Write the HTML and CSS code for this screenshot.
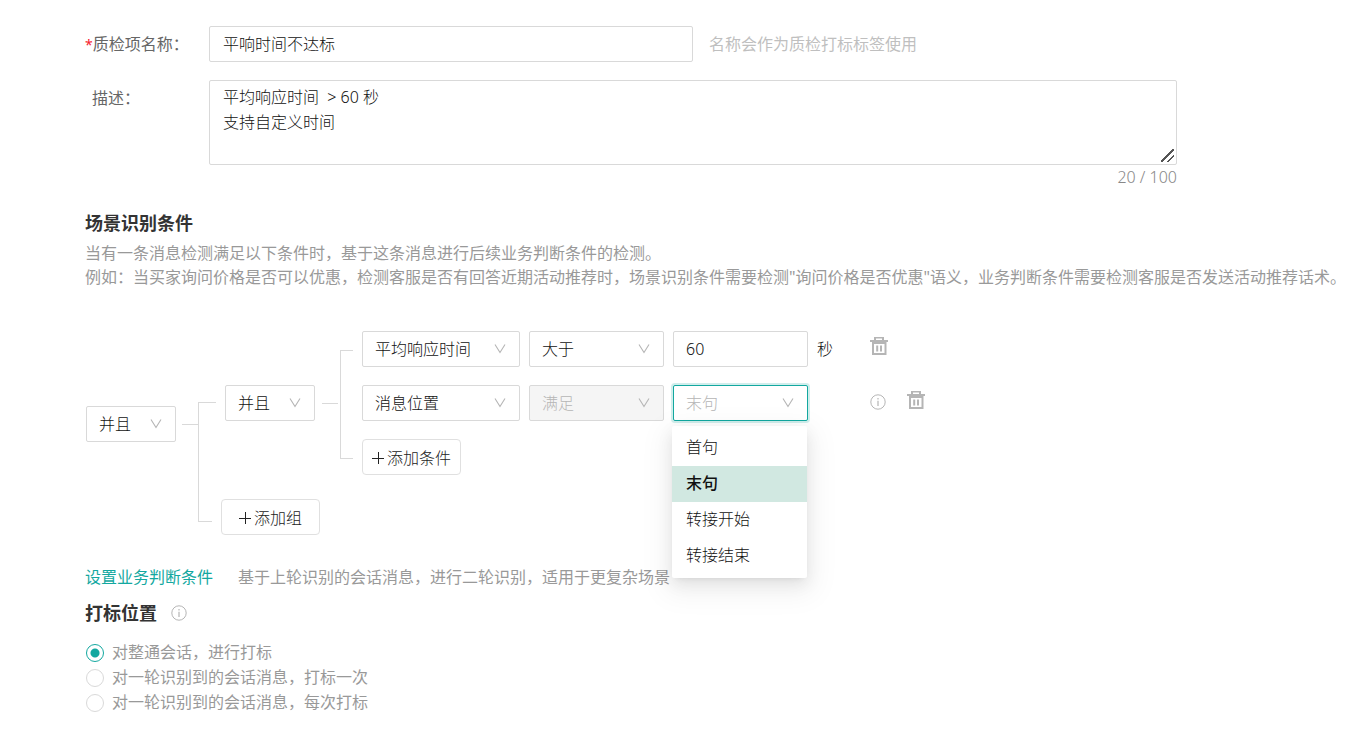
FILE: index.html
```html
<!DOCTYPE html>
<html lang="zh-CN">
<head>
<meta charset="utf-8">
<title>质检项</title>
<link rel="stylesheet" href="styles.css">
</head>
<body>
<svg class="sprite" aria-hidden="true">
  <symbol id="chevron" viewBox="0 0 12 12"><path d="M1 1.500 6 9.500 11 1.500" fill="none" stroke="currentColor" stroke-width="1.100"/></symbol>
  <symbol id="trash" viewBox="0 0 18 18"><path d="M0 3h18v2H0zM4 3V0h10v3h-2V1.500H6V3zM2 5h14.500v13H2zM4 7v9h10.500V7zM6.200 8.600h2v6h-2zM10 8.600h2v6h-2z" fill="currentColor" fill-rule="evenodd"/></symbol>
  <symbol id="info" viewBox="0 0 16 16"><circle cx="8" cy="8" r="7.200" fill="none" stroke="currentColor"/><path d="M7.400 4h1.200v1.400H7.400zM7.400 6.800h1.200V12H7.400z" fill="currentColor"/></symbol>
  <symbol id="plus" viewBox="0 0 12 12"><path d="M0 6.500h12M6.500 0v12" fill="none" stroke="currentColor"/></symbol>
</svg>
<main class="page">
  <form>
    <div class="field">
      <label class="field-label" for="name"><span class="required">*</span>质检项名称：</label>
      <input class="control name-input" id="name" type="text" value="平响时间不达标">
      <span class="hint">名称会作为质检打标标签使用</span>
    </div>
    <div class="field field-desc">
      <label class="field-label indent" for="desc">描述：</label>
      <div class="desc-box">
        <textarea class="control desc-input" id="desc">平均响应时间  &gt; 60 秒
支持自定义时间</textarea>
        <div class="counter">20 / 100</div>
      </div>
    </div>

    <h2 class="title">场景识别条件</h2>
    <p class="note">当有一条消息检测满足以下条件时，基于这条消息进行后续业务判断条件的检测。<br>例如：当买家询问价格是否可以优惠，检测客服是否有回答近期活动推荐时，场景识别条件需要检测"询问价格是否优惠"语义，业务判断条件需要检测客服是否发送活动推荐话术。</p>

    <div class="tree">
      <div class="picker logic root-logic">
        <select class="control" aria-label="组关系"><option>并且</option></select>
        <svg class="chevron"><use href="#chevron"/></svg>
      </div>
      <span class="stub root-stub"></span>
      <div class="bracket root-bracket"><span class="arm arm-top"></span><span class="arm arm-bottom"></span></div>
      <div class="groups">
        <div class="group">
          <div class="picker logic">
            <select class="control" aria-label="条件关系"><option>并且</option></select>
            <svg class="chevron"><use href="#chevron"/></svg>
          </div>
          <span class="stub group-stub"></span>
          <div class="bracket group-bracket"><span class="arm arm-top"></span><span class="arm arm-bottom"></span></div>
          <div class="rules">
            <div class="rule">
              <div class="picker metric">
                <select class="control" aria-label="指标"><option>平均响应时间</option></select>
                <svg class="chevron"><use href="#chevron"/></svg>
              </div>
              <div class="picker value">
                <select class="control" aria-label="比较"><option>大于</option></select>
                <svg class="chevron"><use href="#chevron"/></svg>
              </div>
              <input class="control value" id="seconds" type="text" value="60">
              <label class="unit" for="seconds">秒</label>
              <div class="actions">
                <button class="icon-button" type="button" aria-label="删除"><svg class="trash"><use href="#trash"/></svg></button>
              </div>
            </div>
            <div class="rule">
              <div class="picker metric">
                <select class="control" aria-label="指标"><option>消息位置</option></select>
                <svg class="chevron"><use href="#chevron"/></svg>
              </div>
              <div class="picker value">
                <select class="control" aria-label="比较" disabled><option>满足</option></select>
                <svg class="chevron"><use href="#chevron"/></svg>
              </div>
              <div class="picker value open">
                <select class="control" aria-label="位置"><option>末句</option></select>
                <svg class="chevron"><use href="#chevron"/></svg>
                <ul class="menu" role="listbox" aria-label="位置">
                  <li class="option" role="option">首句</li>
                  <li class="option selected" role="option" aria-selected="true">末句</li>
                  <li class="option" role="option">转接开始</li>
                  <li class="option" role="option">转接结束</li>
                </ul>
              </div>
              <span class="unit"></span>
              <div class="actions">
                <svg class="info"><use href="#info"/></svg>
                <button class="icon-button" type="button" aria-label="删除"><svg class="trash"><use href="#trash"/></svg></button>
              </div>
            </div>
            <button class="add" type="button"><svg class="plus"><use href="#plus"/></svg>添加条件</button>
          </div>
        </div>
        <button class="add" type="button"><svg class="plus"><use href="#plus"/></svg>添加组</button>
      </div>
    </div>

    <div class="next"><a class="link" href="#">设置业务判断条件</a><span>基于上轮识别的会话消息，进行二轮识别，适用于更复杂场景</span></div>

    <div class="mark-head"><h2 class="title">打标位置</h2><svg class="info"><use href="#info"/></svg></div>
    <div class="radios">
      <label class="radio"><input type="radio" name="mark" checked>对整通会话，进行打标</label>
      <label class="radio"><input type="radio" name="mark">对一轮识别到的会话消息，打标一次</label>
      <label class="radio"><input type="radio" name="mark">对一轮识别到的会话消息，每次打标</label>
    </div>
  </form>
</main>
</body>
</html>
```
FILE: styles.css
```css
* { box-sizing: border-box; }

body {
  margin: 0;
  background: #fff;
  color: #333;
  font: 300 16px/24px "Noto Sans", "Noto Sans CJK SC", sans-serif;
}

.sprite { display: none; }

.page { padding: 26px 24px 16px 85px; }

.field {
  display: flex;
  align-items: center;
  max-width: 1092px;
  margin-bottom: 18px;
}

.field-desc { align-items: flex-start; margin-bottom: 20px; }

.field-label { width: 124px; flex: none; color: #666; font-weight: 400; }
.indent { padding: 6px 0 0 7px; }
.required { color: #f5222d; font-size: 14px; }

.control {
  width: 100%;
  height: 36px;
  padding: 0 12px;
  border: 1px solid #d9d9d9;
  border-radius: 2px;
  outline: 0;
  background: #fff;
  color: #111;
  font: inherit;
  appearance: none;
}

.name-input { flex: 0 1 484px; padding: 0 13px 2px; }
.hint { margin-left: 16px; color: #bfbfbf; font-weight: 400; }

.desc-box { flex: 1; }

.desc-input {
  display: block;
  height: 85px;
  padding: 4px 13px;
  line-height: 25px;
  resize: vertical;
}

.desc-input::-webkit-resizer {
  background: linear-gradient(135deg, transparent 46%, #555 46%, #555 54%, transparent 54%, transparent 72%, #555 72%, #555 80%, transparent 80%) 0 0 / 13px 13px no-repeat;
}

.counter { color: #888; text-align: right; }

.title { margin: 0; color: #333; font-size: 18px; font-weight: 700; line-height: 28px; }
.note { margin: 4px 0 42px; color: #999; font-weight: 400; white-space: nowrap; }

.tree { display: flex; align-items: center; padding-left: 1px; }

.picker { position: relative; display: grid; align-items: center; flex: none; }
.picker > .control, .picker > .chevron { grid-area: 1 / 1; }
.logic { width: 90px; }
.metric { width: 158px; }
.value { width: 135px; flex: none; }

.chevron {
  width: 12px;
  height: 12px;
  margin-right: 14px;
  justify-self: end;
  color: #b5b5b5;
  pointer-events: none;
}

.root-logic, .root-stub { margin-bottom: 18px; }

.stub { width: 16px; height: 1px; background: #d9d9d9; }
.root-stub { margin-left: 6px; }
.group-stub { margin: 0 2px 0 7px; }

.bracket { display: flex; flex-direction: column; align-self: stretch; }
.root-bracket { margin: 71px 5px 13px 0; width: 18px; }
.group-bracket { margin: 19px 9px 16px 0; width: 13px; }
.arm { flex: 1; border-left: 1px solid #d9d9d9; }
.arm-top { border-top: 1px solid #d9d9d9; }
.arm-bottom { border-bottom: 1px solid #d9d9d9; }
.root-bracket .arm-bottom { width: 14px; }

.groups { display: flex; flex-direction: column; align-items: flex-start; gap: 24px; }
.group { display: flex; align-items: center; padding-left: 4px; }
.rules { display: flex; flex-direction: column; align-items: flex-start; gap: 18px; }
.rule { display: flex; align-items: center; gap: 9px; }

.unit { width: 44px; color: #111; }
.actions { display: flex; align-items: center; gap: 21px; padding-bottom: 6px; }

.icon-button { display: flex; padding: 0; border: 0; background: none; color: #b5b5b5; }
.trash { width: 18px; height: 18px; }
.info { width: 16px; height: 16px; color: #b5b5b5; }
.actions .info { margin-top: 4px; }

.control:disabled { background: #f5f5f5; color: #b5b5b5; opacity: 1; }

.open > .control {
  border-color: #13a8a0;
  box-shadow: 0 0 0 2px rgba(19, 168, 160, 0.2);
  color: #b5b5b5;
}

.menu {
  position: absolute;
  z-index: 1;
  top: 41px;
  left: -1px;
  width: 100%;
  margin: 0;
  padding: 4px 0;
  border-radius: 2px;
  background: #fff;
  box-shadow: 0 3px 6px -4px rgba(0, 0, 0, 0.12), 0 6px 16px rgba(0, 0, 0, 0.08), 0 9px 28px 8px rgba(0, 0, 0, 0.05);
  color: #111;
  list-style: none;
}

.option { padding: 5px 14px 7px; }
.selected { background: #d1e8e1; font-weight: 500; }

.add {
  display: flex;
  align-items: center;
  justify-content: center;
  gap: 3px;
  width: 99px;
  height: 36px;
  padding: 2px 0 0;
  border: 1px solid #e0e0e0;
  border-radius: 4px;
  background: #fff;
  color: #222;
  font: inherit;
}

.plus { width: 12px; height: 12px; }

.next { display: flex; gap: 25px; margin-top: 30px; color: #999; font-weight: 400; }
.link { color: #13a8a0; text-decoration: none; }

.mark-head { display: flex; align-items: center; gap: 14px; margin-top: 10px; }

.radios { margin-top: 13px; color: #999; font-weight: 400; }
.radio { display: flex; align-items: center; gap: 8px; padding-left: 1px; line-height: 25px; }

.radio input {
  width: 18px;
  height: 18px;
  margin: 0;
  border: 1px solid #d9d9d9;
  border-radius: 50%;
  background: #fff;
  appearance: none;
}

.radio input:checked {
  border-color: #13a8a0;
  background: radial-gradient(circle, #13a8a0 4px, #fff 5px);
}
```
